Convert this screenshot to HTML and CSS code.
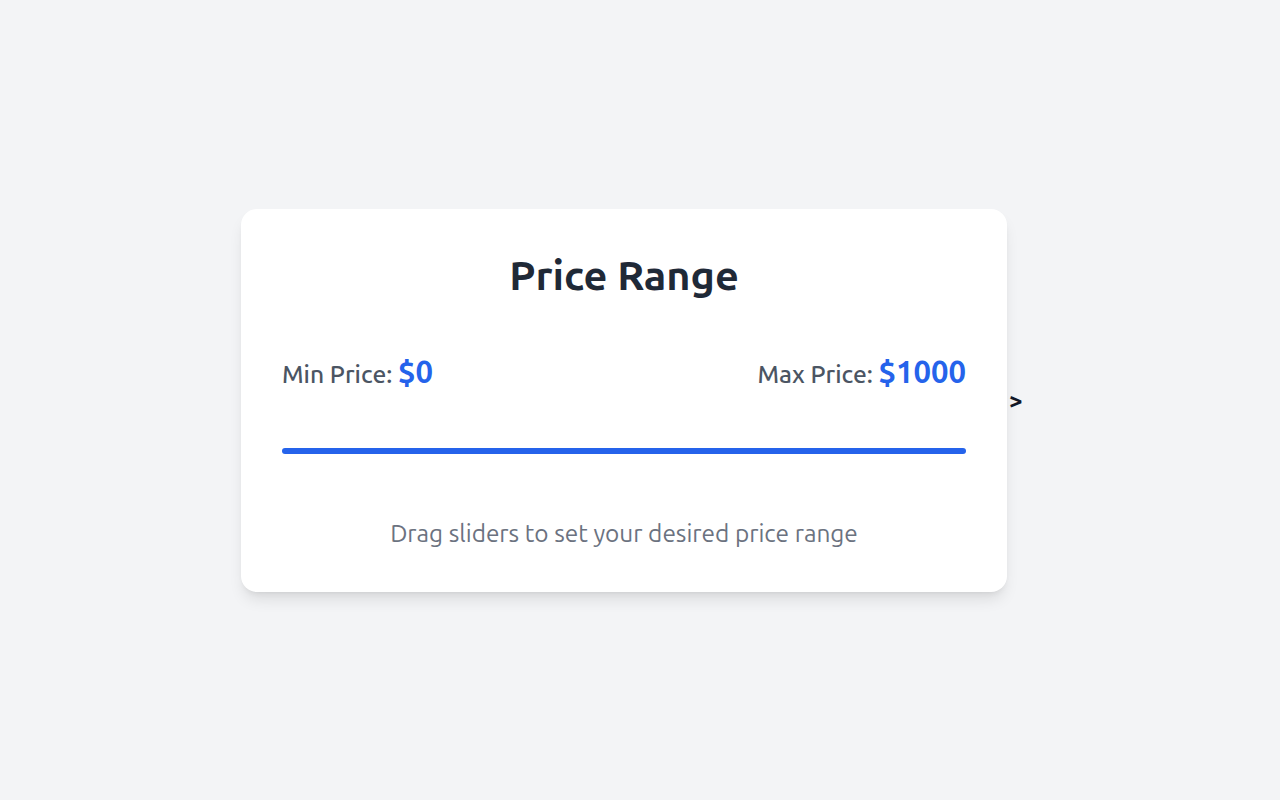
FILE: index.html
```html
<!DOCTYPE html>
<html lang="en">
<head>
    <meta charset="UTF-8">
    <meta name="viewport" content="width=device-width, initial-scale=1.0">
    <title>Price Range</title>
    <link rel="stylesheet" href="styles.css">
</head>
<body>
    <div class="card">
        <h1 class="title">Price Range</h1>

        <div class="values">
            <div class="value-item">
                <span class="label">Min Price:</span>
                <span class="amount" id="min-value">$0</span>
            </div>
            <div class="value-item">
                <span class="label">Max Price:</span>
                <span class="amount" id="max-value">$1000</span>
            </div>
        </div>

        <div class="slider">
            <div class="track"></div>
        </div>

        <p class="hint">Drag sliders to set your desired price range</p>
    </div>
    <span class="stray">&gt;</span>
</body>
</html>
```

FILE: styles.css
```css
body {
    margin: 0;
    min-height: 100vh;
    background-color: #f3f4f6;
    font-family: Ubuntu, "Noto Sans", "DejaVu Sans", sans-serif;
    display: flex;
    align-items: center;
    justify-content: center;
}
.card {
    width: 766px;
    box-sizing: border-box;
    background-color: #fff;
    border-radius: 16px;
    padding: 41px 41px 43px;
    box-shadow: 0 10px 15px -3px rgba(0, 0, 0, 0.1), 0 4px 6px -4px rgba(0, 0, 0, 0.1);
}
.title {
    margin: 0 0 52px;
    text-align: center;
    font-size: 41.5px;
    line-height: 50px;
    font-weight: 700;
    color: #1f2937;
}
.values {
    display: flex;
    justify-content: space-between;
    align-items: baseline;
    line-height: 40px;
}
.label {
    font-size: 24.6px;
    font-weight: 500;
    color: #4b5563;
}
.amount {
    margin-left: 2px;
    font-size: 31px;
    font-weight: 700;
    color: #2563eb;
}
.slider {
    padding: 51px 0 63px;
}
.track {
    height: 6px;
    border-radius: 3px;
    background-color: #2563eb;
}
.hint {
    margin: 0;
    text-align: center;
    font-size: 24.4px;
    line-height: 32px;
    color: #6b7280;
}
.stray {
    width: 30px;
    padding-left: 2px;
    font-size: 24px;
    font-weight: 700;
    color: #111827;
}
```
